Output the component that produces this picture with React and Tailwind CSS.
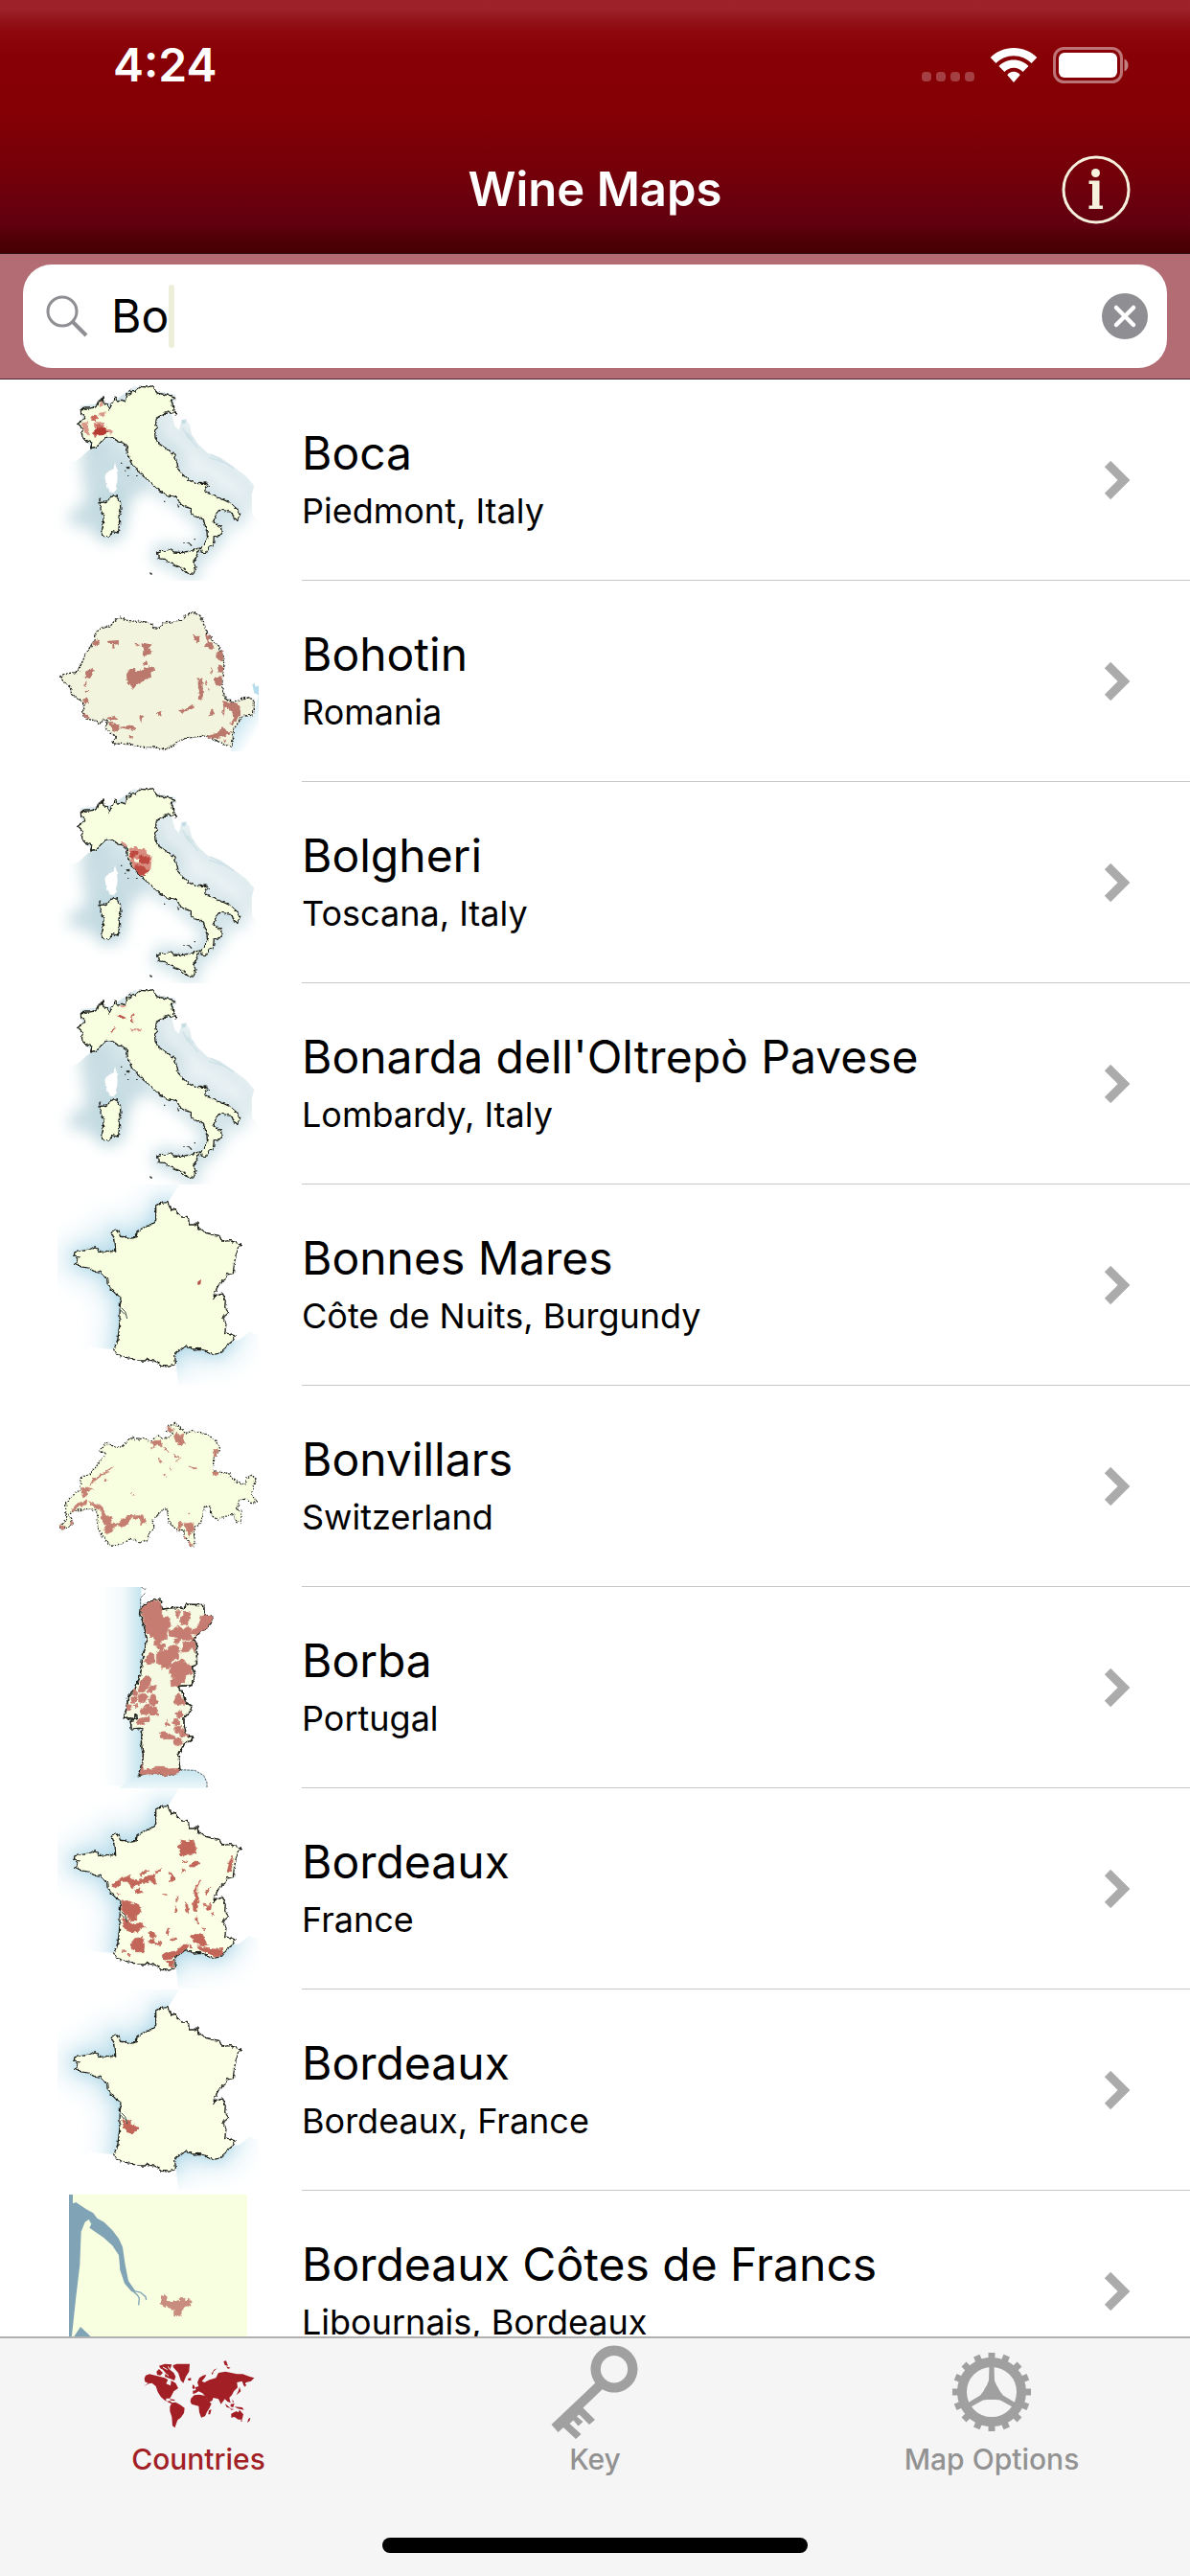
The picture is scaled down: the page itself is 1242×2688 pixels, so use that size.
import { useState } from "react";

const ITALY = "M133,112 L146,108 158,108 178,105 186,98 190,84 197,84 201,74 204,92 214,95 222,112 228,98 238,86 240,72 248,84 262,82 270,88 276,64 286,66 290,52 304,54 312,48 320,40 340,42 358,38 362,48 372,60 400,66 425,70 428,76 412,84 420,92 422,108 430,120 430,126 412,118 398,124 385,130 370,138 368,158 373,170 364,178 366,200 376,218 400,234 422,248 432,270 438,298 456,320 480,338 500,344 525,342 532,350 522,358 522,368 540,378 570,390 600,404 622,424 630,440 626,460 614,456 606,434 580,428 568,424 556,440 548,464 556,470 572,480 574,504 550,510 548,534 534,542 526,562 512,562 508,548 518,536 530,518 528,494 520,466 508,448 490,450 478,434 478,422 458,416 444,408 434,386 400,380 380,366 352,340 326,318 306,296 290,278 280,250 276,222 250,212 232,200 214,196 196,214 184,228 164,234 168,216 150,208 138,200 136,184 140,172 124,156 138,146 146,136 134,124 Z M192,404 L206,402 220,394 236,380 244,382 256,400 258,426 252,450 254,470 250,498 232,494 222,510 206,508 196,498 202,480 204,446 196,424 Z M374,562 L386,552 400,556 410,548 424,558 450,560 480,554 504,546 498,564 486,588 492,604 486,628 468,624 446,606 412,592 392,580 376,578 Z";
const FRANCE = "M405,74 L412,90 420,98 430,92 434,108 452,120 470,122 472,144 490,144 498,134 500,154 520,168 545,174 566,178 576,196 600,194 634,206 620,232 614,262 610,296 590,300 584,316 566,330 552,356 548,376 556,364 578,360 586,384 584,402 596,420 578,434 588,456 584,482 616,492 606,510 586,526 574,544 550,550 530,544 506,532 484,534 466,524 446,534 428,548 430,580 410,588 384,586 374,574 340,564 334,570 308,570 290,562 262,556 246,550 236,534 248,508 254,460 256,400 258,372 240,358 220,336 218,314 204,306 196,292 178,290 160,280 128,274 114,264 124,258 118,248 130,246 112,240 114,230 136,226 160,222 178,212 192,230 216,226 242,228 240,194 228,164 252,162 256,180 290,186 306,184 310,164 332,152 356,142 368,130 368,86 384,76 Z";
const ROMANIA = "M67,288 L92,278 124,274 134,250 150,214 172,180 180,150 200,134 224,132 240,112 258,102 276,112 320,116 348,118 360,134 378,136 392,120 450,112 460,96 486,86 506,96 520,130 530,156 556,184 574,208 584,240 576,290 576,330 586,356 612,370 640,356 660,354 676,362 676,390 672,408 640,412 626,432 610,456 610,486 604,508 580,500 550,484 526,474 500,476 446,484 424,504 400,516 368,510 320,508 290,500 236,498 234,488 244,476 214,456 210,440 218,430 204,420 190,438 180,426 150,420 138,404 146,380 136,366 104,344 100,322 82,308 Z";
const SWITZERLAND = "M133,275 L160,266 190,230 214,200 194,194 208,168 228,170 236,180 262,180 284,158 296,148 304,158 330,152 352,160 376,144 386,154 406,152 420,136 402,130 408,114 426,106 442,118 456,128 458,136 486,130 520,136 552,156 568,182 560,200 548,216 548,248 556,258 596,262 606,278 634,296 650,294 654,276 668,268 682,280 672,304 668,330 684,350 668,356 650,342 628,346 622,378 636,382 636,414 622,416 612,390 576,400 560,406 544,396 538,366 520,366 516,392 508,418 486,438 490,470 486,492 474,494 470,470 456,462 456,440 434,440 408,414 404,374 386,380 356,412 364,430 348,448 342,470 320,478 288,466 266,480 230,490 216,478 196,450 184,430 186,400 180,376 150,374 108,380 96,394 110,420 86,434 68,434 76,420 90,404 86,380 86,352 110,330 132,312 Z";
const PORTUGAL = "M380,54 L386,64 384,76 390,88 410,84 434,82 454,86 466,72 518,74 520,104 546,112 540,132 524,150 510,156 486,180 496,196 496,262 480,268 490,290 480,326 436,328 454,352 460,378 480,390 474,410 456,428 456,448 464,484 484,486 480,500 460,504 438,544 444,590 420,604 398,608 380,600 344,600 312,608 326,570 328,540 322,510 326,460 292,462 288,436 310,430 308,418 298,430 268,428 276,396 282,360 302,340 320,290 326,240 340,186 334,150 320,104 322,84 340,66 Z";

const ROMANIA_WINE = "M174,172 L192,174 194,184 182,196 172,186 Z M218,176 L250,174 252,186 240,188 242,200 232,200 232,186 218,186 Z M304,182 L318,186 312,194 Z M322,188 L336,184 356,188 344,200 356,206 352,218 340,216 334,230 326,222 328,206 Z M334,238 L344,240 338,252 328,250 Z M276,282 L284,264 304,264 304,274 328,266 346,256 364,264 352,276 354,290 328,300 310,312 298,326 288,314 278,308 Z M148,272 L172,260 176,270 162,294 146,290 Z M152,296 L150,320 142,318 Z M148,332 L158,334 152,340 Z M140,362 L152,352 158,368 144,372 Z M138,406 L156,408 158,418 146,416 Z M486,160 L504,158 508,172 498,182 488,172 Z M522,154 L534,158 540,170 530,174 546,186 550,198 540,204 520,190 530,180 Z M558,210 L576,208 580,236 566,238 556,226 Z M540,262 L548,268 542,282 Z M566,250 L580,260 580,274 568,276 558,268 Z M550,290 L574,286 576,320 560,316 548,302 Z M500,292 L514,296 516,344 510,362 500,358 504,336 500,318 Z M522,298 L530,312 524,318 Z M530,324 L542,328 534,334 Z M438,394 L464,388 486,372 488,386 464,396 450,402 Z M544,388 L554,408 532,412 Z M366,402 L382,396 386,412 378,412 Z M316,412 L334,408 324,420 322,434 Z M214,418 L240,410 248,424 226,424 Z M218,430 L240,434 256,446 246,460 232,456 228,442 Z M256,446 L296,438 304,456 276,452 Z M280,474 L298,474 288,482 Z M576,364 L610,370 626,376 636,406 622,422 608,440 596,436 610,424 608,402 596,388 584,386 582,410 576,404 580,386 Z M526,474 L560,464 576,444 588,458 608,460 594,472 560,480 536,482 Z M580,484 L588,486 584,496 Z";
const SWISS_WINE = "M402,120 L416,116 424,130 408,134 Z M424,148 L434,132 444,146 456,138 452,154 464,170 440,174 Z M350,166 L366,160 382,160 388,178 370,172 350,190 362,174 Z M394,178 L408,192 400,192 Z M376,216 L390,228 380,226 Z M424,202 L450,218 430,212 Z M430,224 L438,220 434,228 Z M414,242 L420,248 414,248 Z M396,266 L400,272 396,272 Z M474,240 L494,246 492,252 Z M548,194 L562,184 556,210 548,208 Z M548,258 L564,258 560,270 552,268 Z M236,240 L210,262 186,278 160,302 172,280 204,260 Z M136,308 L154,306 170,310 152,318 150,336 138,334 Z M206,276 L214,282 208,288 Z M106,376 L120,358 152,348 150,360 122,368 108,384 Z M158,350 L178,360 204,368 208,392 232,402 226,416 246,420 284,394 326,396 338,412 320,426 322,406 288,400 278,424 264,430 250,424 234,432 232,444 214,452 204,438 212,426 196,398 200,380 178,370 Z M292,322 L302,332 298,330 Z M472,386 L474,390 470,390 Z M444,414 L454,426 436,438 Z M458,420 L484,416 488,434 476,448 472,462 462,432 Z M472,476 L484,486 474,492 Z M70,424 L84,430 72,436 Z M100,412 L110,418 102,424 Z M454,460 L464,464 458,468 Z";
const PORTUGAL_WINE = "M322,88 L340,68 378,60 386,78 386,108 412,116 414,140 404,150 400,184 384,186 382,204 362,200 364,184 340,160 332,128 Z M430,92 L446,92 438,116 428,106 Z M452,104 L460,94 476,96 468,134 450,136 444,122 Z M510,110 L520,104 546,112 538,132 524,150 510,156 496,166 476,164 490,148 504,132 Z M406,152 L424,152 440,138 454,152 468,140 480,152 476,166 488,178 482,190 470,182 450,184 430,174 410,172 Z M424,182 L444,178 440,196 430,196 Z M454,190 L492,190 490,224 480,208 470,220 446,222 452,210 Z M370,206 L384,194 400,202 384,220 Z M370,224 L400,214 420,200 438,202 440,240 420,250 408,270 386,274 382,258 370,256 Z M334,246 L350,222 362,230 364,258 340,260 Z M412,262 L432,252 452,242 462,260 478,262 480,292 462,292 460,310 440,326 416,330 414,310 426,304 410,290 Z M318,312 L342,294 352,308 350,324 334,344 314,348 Z M370,330 L354,350 342,344 352,326 Z M300,336 L312,350 308,360 296,356 Z M290,360 L310,362 306,380 292,378 Z M314,354 L340,352 342,370 330,380 314,378 Z M350,356 L364,354 376,378 360,390 350,386 346,374 Z M276,384 L292,384 290,402 278,402 Z M296,386 L312,386 306,396 Z M336,386 L350,384 348,392 330,396 Z M320,402 L350,392 370,394 372,414 378,420 344,416 322,418 Z M316,430 L350,424 344,438 324,448 308,452 306,444 Z M426,362 L440,350 460,378 456,388 426,384 Z M430,414 L446,402 452,420 440,432 Z M418,442 L430,428 444,440 440,452 424,450 Z M396,446 L404,436 410,450 398,454 Z M424,456 L446,454 446,470 436,480 426,470 Z M448,464 L454,464 468,486 440,486 Z M382,474 L400,474 428,486 428,494 400,494 382,488 Z M426,492 L450,492 450,508 436,516 426,504 Z M326,572 L330,594 344,584 352,594 366,580 392,580 398,588 442,586 440,598 400,610 384,602 350,602 316,606 Z";
const FRANCE_WINE = "M442,180 L466,184 486,180 494,206 494,220 462,226 452,232 442,220 446,206 436,202 450,194 Z M606,228 L610,240 602,278 592,278 598,250 Z M472,264 L490,246 506,252 490,264 Z M450,246 L466,246 460,252 Z M450,270 L462,276 452,280 Z M316,288 L330,278 348,276 336,284 320,292 Z M364,280 L386,270 374,284 Z M250,304 L264,300 290,290 284,302 314,306 342,292 364,290 368,318 352,308 322,316 304,322 294,330 280,310 262,310 254,326 238,330 230,320 Z M408,280 L426,294 426,306 406,312 418,302 Z M302,340 L316,332 324,344 308,348 Z M246,346 L256,350 250,354 Z M388,350 L404,350 396,352 Z M508,304 L498,328 498,352 502,366 496,404 486,402 484,380 492,366 488,342 494,322 Z M540,324 L534,340 524,352 526,338 Z M434,356 L436,370 430,370 Z M428,386 L436,402 430,408 Z M460,374 L468,384 470,410 464,402 Z M496,414 L500,444 494,432 Z M518,376 L528,392 542,376 540,398 528,400 Z M542,408 L552,410 546,416 Z M262,368 L280,374 304,380 314,382 322,406 308,416 308,432 290,434 278,420 262,404 Z M262,420 L280,430 292,442 306,442 324,440 334,452 318,456 310,468 290,468 270,460 266,440 Z M288,506 L302,488 326,484 332,508 330,530 304,530 292,518 Z M344,470 L360,466 370,484 356,486 Z M344,500 L360,490 366,504 386,496 386,508 366,508 Z M400,464 L412,456 406,476 Z M412,492 L432,486 434,492 416,496 Z M510,456 L526,458 520,464 Z M478,478 L494,472 512,474 522,494 530,508 514,512 500,506 486,500 Z M388,540 L400,532 430,528 456,504 470,508 460,524 432,542 416,552 400,556 390,550 Z M404,562 L424,556 424,580 408,574 Z M474,506 L484,516 476,516 Z M498,512 L530,520 556,522 578,520 576,540 556,546 536,536 506,524 Z M262,524 L274,528 266,530 Z M278,534 L290,540 284,544 Z";

const PLACES = [
  { name: "Boca", region: "Piedmont, Italy", map: "piedmont" },
  { name: "Bohotin", region: "Romania", map: "romania" },
  { name: "Bolgheri", region: "Toscana, Italy", map: "toscana" },
  { name: "Bonarda dell'Oltrepò Pavese", region: "Lombardy, Italy", map: "lombardy" },
  { name: "Bonnes Mares", region: "Côte de Nuits, Burgundy", map: "burgundy" },
  { name: "Bonvillars", region: "Switzerland", map: "switzerland" },
  { name: "Borba", region: "Portugal", map: "portugal" },
  { name: "Bordeaux", region: "France", map: "france" },
  { name: "Bordeaux", region: "Bordeaux, France", map: "bordeaux" },
  { name: "Bordeaux Côtes de Francs", region: "Libournais, Bordeaux", map: "libournais" },
];

// filters and clips shared by all the thumbnails
function MapDefs() {
  return (
    <svg width="0" height="0" className="absolute" aria-hidden="true">
      <defs>
        <filter id="rough" x="-5%" y="-5%" width="110%" height="110%">
          <feTurbulence type="fractalNoise" baseFrequency="0.09" numOctaves="2" seed="4" result="n" />
          <feDisplacementMap in="SourceGraphic" in2="n" scale="13" xChannelSelector="R" yChannelSelector="G" />
        </filter>
        <filter id="haze" filterUnits="userSpaceOnUse" x="-100" y="-100" width="950" height="950"><feGaussianBlur stdDeviation="22" /></filter>
        <filter id="wideHaze" filterUnits="userSpaceOnUse" x="-100" y="-100" width="950" height="950"><feGaussianBlur stdDeviation="42" /></filter>
        <clipPath id="frenchSea">
          <path d="M60,18 H442 L405,74 L320,300 L236,534 L160,528 L132,550 L90,640 V648 H60 Z M428,540 L438,646 H690 V488 L660,480 L630,504 L600,510 L500,500 Z" />
        </clipPath>
      </defs>
    </svg>
  );
}

function Land({ d, fill = "#f8ffe0", dash, width = 4 }) {
  return <path d={d} fill={fill} stroke="#22241f" strokeWidth={width} strokeDasharray={dash} strokeLinejoin="round" filter="url(#rough)" />;
}

function Italy({ children }) {
  return (
    <svg viewBox="60 18 630 630" className="w-full h-full">
      <g filter="url(#haze)">
        <path d="M130,250 L210,205 L290,290 L350,350 L290,400 L270,480 L220,530 L170,490 L95,470 L100,430 L150,400 Z" fill="#c9dee4" />
        <path d={ITALY} fill="none" stroke="#b9d6de" strokeWidth="36" opacity="0.75" />
        <path d="M370,130 L440,120 L690,340 V450 L620,400 L520,330 L440,260 Z" fill="#eaf2f4" />
        <path d="M366,140 L370,200 L430,240 L450,300" fill="none" stroke="#bcd6dd" strokeWidth="24" />
        <path d="M430,150 L520,240 L670,340 V420" fill="none" stroke="#c6dde3" strokeWidth="20" />
      </g>
      <path d="M60,262 L80,270 96,274 112,276 130,264 150,246 168,232 150,210 130,100 230,90 300,40 430,66 418,130 428,165 440,176 448,150 462,144 474,158 480,190 500,220 530,248 570,262 610,290 650,320 676,350 668,380 670,440 690,464 V18 H60 Z" fill="#fff" />
      <path d="M240,280 L246,300 248,330 240,370 228,372 214,352 208,322 222,304 236,298 Z" fill="#fff" filter="url(#rough)" />
      <path d="M450,146 l12,-2 -2,10 -10,2 z M452,170 l14,26 16,16 18,22 M468,186 l18,20 M540,252 l34,20 38,24 M534,262 l42,14 20,8" fill="#bcd9df" stroke="#cfe2e7" strokeWidth="4" />
      <Land d={ITALY} />
      <path d="M258,278 h4 v4 h-4 z M274,292 l12,-2 v8 h-8 z M270,302 h4 v3 h-4 z M279,318 h4 v3 h-4 z M306,318 h5 v3 h-5 z M393,398 h4 v4 h-4 z M454,528 h4 v3 h-4 z M462,530 l10,-2 10,10 -4,2 -6,-8 z M488,516 h4 v4 h-4 z M348,622 l8,2 0,6 -6,-2 z M434,406 l8,10 -4,4 z M190,390 l6,-2 -2,12 -4,2 z" fill="#2e302b" />
      <g filter="url(#rough)">{children}</g>
    </svg>
  );
}

function France({ fill, children }) {
  return (
    <svg viewBox="60 18 630 630" className="w-full h-full">
      <g clipPath="url(#frenchSea)">
        <path d={FRANCE} fill="#9fd0e2" stroke="#cfe8f2" strokeWidth="70" opacity="0.8" filter="url(#wideHaze)" />
        <path d={FRANCE} fill="#9fd0e2" stroke="#a9d6e6" strokeWidth="10" opacity="0.7" filter="url(#haze)" />
      </g>
      <Land d={FRANCE} fill={fill} />
      {children}
      <path d="M260,404 L272,416 278,438 M256,410 L270,424" fill="none" stroke="#3c4a48" strokeWidth="3" />
    </svg>
  );
}

function Thumbnail({ map }) {
  switch (map) {
    case "piedmont":
      return (
        <Italy>
          <path d="M192,86 L202,88 200,104 192,104 Z M136,154 L156,150 158,178 162,192 154,196 142,178 Z M190,122 L212,120 208,132 190,134 Z M216,168 L234,180 228,188 214,184 Z M172,156 L186,150 206,154 204,170 176,170 Z" fill="#d9978a" />
          <path d="M164,134 L180,128 188,138 178,148 164,142 Z M178,158 L200,160 206,170 180,178 Z M172,184 L184,184 180,200 172,198 Z" fill="#c9685c" />
          <path d="M174,172 L208,168 220,182 204,192 184,194 176,188 Z" fill="#b53a33" />
        </Italy>
      );
    case "toscana":
      return (
        <Italy>
          <path d="M258,206 L272,208 280,222 264,218 Z M284,226 L304,220 320,230 336,226 342,244 356,250 352,290 334,312 320,308 300,288 288,266 Z" fill="#d88d80" />
          <path d="M286,240 L304,232 316,240 304,252 288,254 Z M320,244 L336,250 352,256 344,276 320,272 310,262 Z M306,276 L330,282 348,294 334,312 320,310 302,290 Z" fill="#bd4a41" />
          <path d="M300,256 l16,4 -4,10 -12,-2 z" fill="#f8ffe0" />
        </Italy>
      );
    case "lombardy":
      return (
        <Italy>
          <path d="M252,88 L276,88 272,94 256,92 Z M290,160 L324,160 322,166 290,166 Z" fill="#d9978a" />
          <path d="M244,116 L258,118 280,128 272,132 250,124 Z M298,112 L288,124 292,142 300,142 292,126 302,116 Z M238,156 L242,162 230,172 226,166 Z" fill="#c05a4f" />
        </Italy>
      );
    case "romania":
      return (
        <svg viewBox="60 -12 630 630" className="w-full h-full">
          <defs>
            <linearGradient id="blackSea" gradientUnits="userSpaceOnUse" x1="620" x2="676" y1="440" y2="476">
              <stop offset="0" stopColor="#cde8f2" />
              <stop offset="1" stopColor="#fff" />
            </linearGradient>
          </defs>
          <path d="M603,522 L610,460 640,414 676,408 684,370 690,340 V522 Z" fill="url(#blackSea)" />
          <path d="M670,312 L678,310 680,320 690,316 V346 L676,340 Z" fill="#b5ddec" />
          <Land d={ROMANIA} fill="#f2f4dd" dash="7 3" />
          <path d={ROMANIA_WINE} fill="#bb796d" filter="url(#rough)" />
        </svg>
      );
    case "switzerland":
      return (
        <svg viewBox="60 -12 630 630" className="w-full h-full">
          <Land d={SWITZERLAND} dash="5 4" />
          <path d={SWISS_WINE} fill="#c57f71" stroke="#c57f71" strokeWidth="2" filter="url(#rough)" />
        </svg>
      );
    case "portugal":
      return (
        <svg viewBox="60 18 630 630" className="w-full h-full">
          <defs>
            <linearGradient id="atlantic" gradientUnits="userSpaceOnUse" x1="200" x2="330" y1="0" y2="0">
              <stop offset="0" stopColor="#fff" />
              <stop offset="0.5" stopColor="#f1f9fb" />
              <stop offset="1" stopColor="#bfe1ed" />
            </linearGradient>
            <linearGradient id="cadiz" gradientUnits="userSpaceOnUse" x1="0" x2="0" y1="590" y2="650">
              <stop offset="0" stopColor="#c6e5ef" />
              <stop offset="1" stopColor="#eff8fb" />
            </linearGradient>
          </defs>
          <path d="M180,18 H322 L322,84 L336,160 V280 L320,600 L300,640 H180 Z" fill="url(#atlantic)" />
          <path d="M250,648 L312,608 L444,590 L490,592 L518,610 L528,632 V648 Z" fill="url(#cadiz)" />
          <path d="M444,590 L490,592 L518,608 L528,630 V645 M320,84 V52 L334,38 M322,18 l12,8 4,-6" fill="none" stroke="#53646a" strokeWidth="3" strokeDasharray="8 3" />
          <Land d={PORTUGAL} fill="#f7fae2" width={5} />
          <path d={PORTUGAL_WINE} fill="#c67c70" stroke="#c67c70" strokeWidth="2" filter="url(#rough)" />
        </svg>
      );
    case "burgundy":
      return <France fill="#f8ffe0"><path d="M500,322 L510,315 508,330 500,333 498,327 Z" fill="#b9544d" /></France>;
    case "france":
      return <France fill="#faffe6"><path d={FRANCE_WINE} fill="#c16659" stroke="#c16659" strokeWidth="2" filter="url(#rough)" /></France>;
    case "bordeaux":
      return (
        <France fill="#faffe6">
          <path d="M261,420 L268,422 276,436 278,426 290,428 290,440 302,440 302,450 314,452 306,464 292,470 280,466 268,454 Z" fill="#c16659" filter="url(#rough)" />
        </France>
      );
    default:
      return (
        <svg viewBox="60 648 630 630" className="w-full h-full">
          <path d="M96,660 H654 V1278 H96 Z" fill="#f8ffe0" />
          <path d="M96,660 H108 V688 L118,684 150,706 172,718 184,734 206,746 232,772 252,798 264,824 272,880 282,930 304,962 292,964 270,938 256,896 252,850 232,820 204,794 160,764 166,752 158,738 146,746 134,776 130,880 118,980 104,1110 96,1110 Z M112,1104 L132,1074 164,1104 V1140 H112 Z" fill="#80a4b5" />
          <path d="M296,962 L310,974 316,984 314,1006 M300,962 L320,966 336,980 338,990" fill="none" stroke="#80a4b5" strokeWidth="4" />
          <path d="M386,978 L394,972 404,980 402,992 416,996 440,990 448,978 458,988 478,992 478,1006 458,1012 452,1026 446,1040 424,1042 424,1022 406,1014 380,1002 Z" fill="#c98d80" filter="url(#rough)" />
        </svg>
      );
  }
}

function WorldIcon() {
  return (
    <svg viewBox="0 0 405 255" className="w-[135px] h-[85px]" fill="currentColor">
      <path d="M30,108 L44,98 34,94 32,84 36,74 48,70 72,76 96,82 106,88 100,100 114,106 116,90 130,98 138,114 124,124 118,136 112,146 100,146 100,156 112,154 124,164 110,160 96,152 84,142 74,126 68,108 56,98 46,100 Z" />
      <path d="M70,62 L78,54 90,66 82,74 72,72 Z M78,44 L96,38 118,40 112,56 124,66 130,78 126,90 112,84 96,78 98,66 90,56 82,52 Z" />
      <path d="M90,48 l14,8 M96,66 l12,10 M106,46 l6,10" stroke="#f5f5f5" strokeWidth="3" />
      <path d="M122,42 L134,38 174,38 172,62 162,78 154,98 146,90 138,66 122,48 Z M168,84 L178,82 178,90 170,90 Z M112,148 L128,150 126,154 114,152 Z" />
      <path d="M118,160 L130,158 144,166 158,176 156,192 146,206 136,214 130,230 128,238 120,232 118,204 112,186 112,172 Z" />
      <path d="M178,146 L188,136 204,134 224,138 230,152 242,162 236,176 228,188 222,202 210,206 204,190 202,170 180,164 176,156 Z M234,184 L242,180 238,196 232,196 Z" />
      <path d="M184,132 L184,122 194,120 190,112 202,108 198,96 204,82 216,74 226,72 222,80 212,92 220,96 236,88 256,82 264,66 286,62 304,66 322,70 340,70 362,78 376,82 366,92 350,96 344,108 338,92 322,96 324,112 312,124 306,136 298,144 302,160 292,156 284,148 272,164 264,148 248,144 244,154 232,158 224,140 214,130 202,124 192,130 Z" />
      <path d="M184,102 L190,108 188,118 182,114 Z M242,68 L250,56 260,52 248,62 246,72 Z M280,30 L288,28 294,44 284,42 Z M288,46 L302,50 294,54 Z M330,110 L334,124 320,136 326,124 Z M344,98 L352,104 346,110 Z M284,162 L296,172 302,176 290,174 Z M302,164 L314,162 310,174 302,172 Z M314,172 L338,174 344,182 324,178 Z M300,178 L314,180 304,182 Z M308,148 L312,158 308,158 Z" />
      <path d="M304,194 L320,186 326,190 330,182 342,196 338,212 326,212 314,204 304,206 Z M358,210 L364,206 362,216 354,222 Z M334,214 h4 v4 h-4 z" />
    </svg>
  );
}

function KeyIcon() {
  return (
    <svg viewBox="570 2444 98 102" className="w-[98px] h-[102px]" fill="#a0a0a0">
      <path fillRule="evenodd" d="M639,2446.500 a24.500,24.500 0 1 1 -0.010,0 Z M639,2457 a14.200,14.200 0 1 0 0.010,0 Z" />
      <path d="M621,2484 L573.500,2529 580.500,2537 586,2532 599,2544 604.500,2539 592.500,2528 596.500,2524.500 601.500,2530.500 606.500,2526 600,2520.500 602.500,2518.500 613,2529 619,2524 606.500,2511.500 629,2490 Z" />
    </svg>
  );
}

function GearIcon() {
  const teeth = Array.from({ length: 16 }, (_, i) => i * 22.5);
  return (
    <svg viewBox="-42 -42 84 84" className="w-[84px] h-[84px]" fill="#a0a0a0">
      <circle r="31" fill="none" stroke="#a0a0a0" strokeWidth="10" />
      {teeth.map((a) => <path key={a} d="M-3.500,-34 V-41 H3.500 V-34 Z" transform={`rotate(${a})`} />)}
      <circle r="8" />
      {[0, 120, 240].map((a) => <path key={a} d="M-2.500,-28 H2.500 L3,-12 L8,0 H-8 L-3,-12 Z" transform={`rotate(${a})`} />)}
    </svg>
  );
}

function StatusBar() {
  return (
    <div className="flex items-center justify-between h-[132px] pt-1 pl-[118px] pr-16">
      <span className="text-5xl font-semibold">4:24</span>
      <div className="flex items-center gap-4">
        <div className="flex gap-[5px] pt-6 opacity-25">
          {[0, 1, 2, 3].map((i) => <span key={i} className="size-[10px] rounded-[4px] bg-white" />)}
        </div>
        <svg viewBox="0 0 50 36" className="w-[50px] h-9" fill="currentColor">
          <path d="M25,0 C34.500,0 43,3.800 49.300,10 L43.500,16 C38.700,11.200 32.200,8.200 25,8.200 C17.800,8.200 11.300,11.200 6.500,16 L0.700,10 C7,3.800 15.500,0 25,0 Z" />
          <path d="M25,12.500 C31.200,12.500 36.600,15 40.500,19 L34.600,25 C32.200,22.400 28.800,20.700 25,20.700 C21.200,20.700 17.800,22.400 15.400,25 L9.500,19 C13.400,15 18.800,12.500 25,12.500 Z" />
          <path d="M25,24.800 C27.900,24.800 30.300,26 31.700,28.300 L25,36 L18.300,28.300 C19.700,26 22.100,24.800 25,24.800 Z" />
        </svg>
        <svg viewBox="0 0 79 38" className="w-[79px] h-[38px]">
          <rect x="1.500" y="1.500" width="70" height="35" rx="10" fill="none" stroke="#fff" strokeOpacity="0.450" strokeWidth="3" />
          <rect x="6" y="6" width="61" height="26" rx="6" fill="#fff" />
          <path d="M74.500,12.500 C77,13.500 78.500,16 78.500,19 C78.500,22 77,24.500 74.500,25.500 Z" fill="#fff" fillOpacity="0.500" />
        </svg>
      </div>
    </div>
  );
}

function PlaceRow({ place }) {
  return (
    <li>
      <a href="#map" className="flex h-[210px] pl-15">
        <div className="w-[210px] h-[210px] shrink-0">
          <Thumbnail map={place.map} />
        </div>
        <div className="flex flex-1 items-center justify-between ml-[45px] pr-15 border-b border-[#c8c8ca]">
          <div className="flex flex-col gap-2 pb-1">
            <span className="text-5xl leading-[60px]">{place.name}</span>
            <span className="text-4xl leading-[44px]">{place.region}</span>
          </div>
          <svg viewBox="0 0 32 40" className="w-8 h-10" fill="none" stroke="#ababab" strokeWidth="9">
            <path d="M6,3 L23,20 L6,37" />
          </svg>
        </div>
      </a>
    </li>
  );
}

const TABS = [
  { label: "Countries", icon: WorldIcon },
  { label: "Key", icon: KeyIcon },
  { label: "Map Options", icon: GearIcon },
];

export default function App() {
  const [query, setQuery] = useState("Bo");
  const [tab, setTab] = useState("Countries");

  return (
    <div className="flex flex-col h-screen overflow-hidden bg-white text-black font-[Inter,'Liberation_Sans',sans-serif]">
      <MapDefs />
      <header className="border-b border-[#2d1214] text-white bg-[linear-gradient(#9f222b_0px,#9c2129_10px,#911117_24px,#8d070d_34px,#870005_58px,#830004_120px,#73000a_184px,#600010_236px,#530009_246px,#440004_264px)]">
        <StatusBar />
        <div className="grid grid-cols-[1fr_auto_1fr] items-center h-[132px] px-[62px]">
          <h1 className="col-start-2 text-[49px] leading-[60px] font-semibold">Wine Maps</h1>
          <button aria-label="About" className="justify-self-end">
            <svg viewBox="0 0 72 72" className="size-[72px]" fill="#f5f1dc">
              <circle cx="36" cy="36" r="34" fill="none" stroke="#f5f1dc" strokeWidth="3" />
              <circle cx="35.500" cy="18.500" r="4.500" />
              <path d="M28.500,26.500 H39.500 V52.500 H43 V56 H28.500 V52.500 H32 V30 H28.500 Z" />
            </svg>
          </button>
        </div>
      </header>

      <div className="px-6 py-[11px] bg-[#b36c74] border-b border-[#4d2830]">
        <div className="flex items-center justify-between h-[108px] pl-6 pr-5 rounded-[30px] bg-white">
          <label className="flex flex-1 items-center">
            <svg viewBox="0 0 44 44" className="size-11 mr-6" fill="none" stroke="#8e8e93" strokeWidth="3">
              <circle cx="17" cy="17" r="15" />
              <path d="M28,28 L42,42" strokeWidth="4" />
            </svg>
            <input aria-label="Search" value={query} onChange={(e) => setQuery(e.target.value)} className="field-sizing-content text-5xl leading-[60px] outline-none" />
            <span className="w-[6px] h-[66px] rounded-full bg-[#eeefdb]" />
          </label>
          <button aria-label="Clear" onClick={() => setQuery("")}>
            <svg viewBox="0 0 48 48" className="size-12">
              <circle cx="24" cy="24" r="24" fill="#8e8e93" />
              <path d="M15,15 L33,33 M33,15 L15,33" stroke="#fff" strokeWidth="4.500" strokeLinecap="round" />
            </svg>
          </button>
        </div>
      </div>

      <ul className="flex-1 min-h-0 overflow-hidden">
        {PLACES.map((place, i) => <PlaceRow key={i} place={place} />)}
      </ul>

      <nav className="border-t-2 border-[#b0b0b0] bg-[#f5f5f5]">
        <div className="grid grid-cols-3 pt-1">
          {TABS.map(({ label, icon: Icon }) => (
            <button key={label} onClick={() => setTab(label)} className={tab === label ? "flex flex-col items-center text-[#a11f25]" : "flex flex-col items-center text-[#929292]"}>
              <span className="flex items-center h-[104px]"><Icon /></span>
              <span className="text-[30px] leading-[36px] font-medium">{label}</span>
            </button>
          ))}
        </div>
        <div className="w-[444px] h-4 mx-auto mt-16 mb-6 rounded-full bg-black" />
      </nav>
    </div>
  );
}
